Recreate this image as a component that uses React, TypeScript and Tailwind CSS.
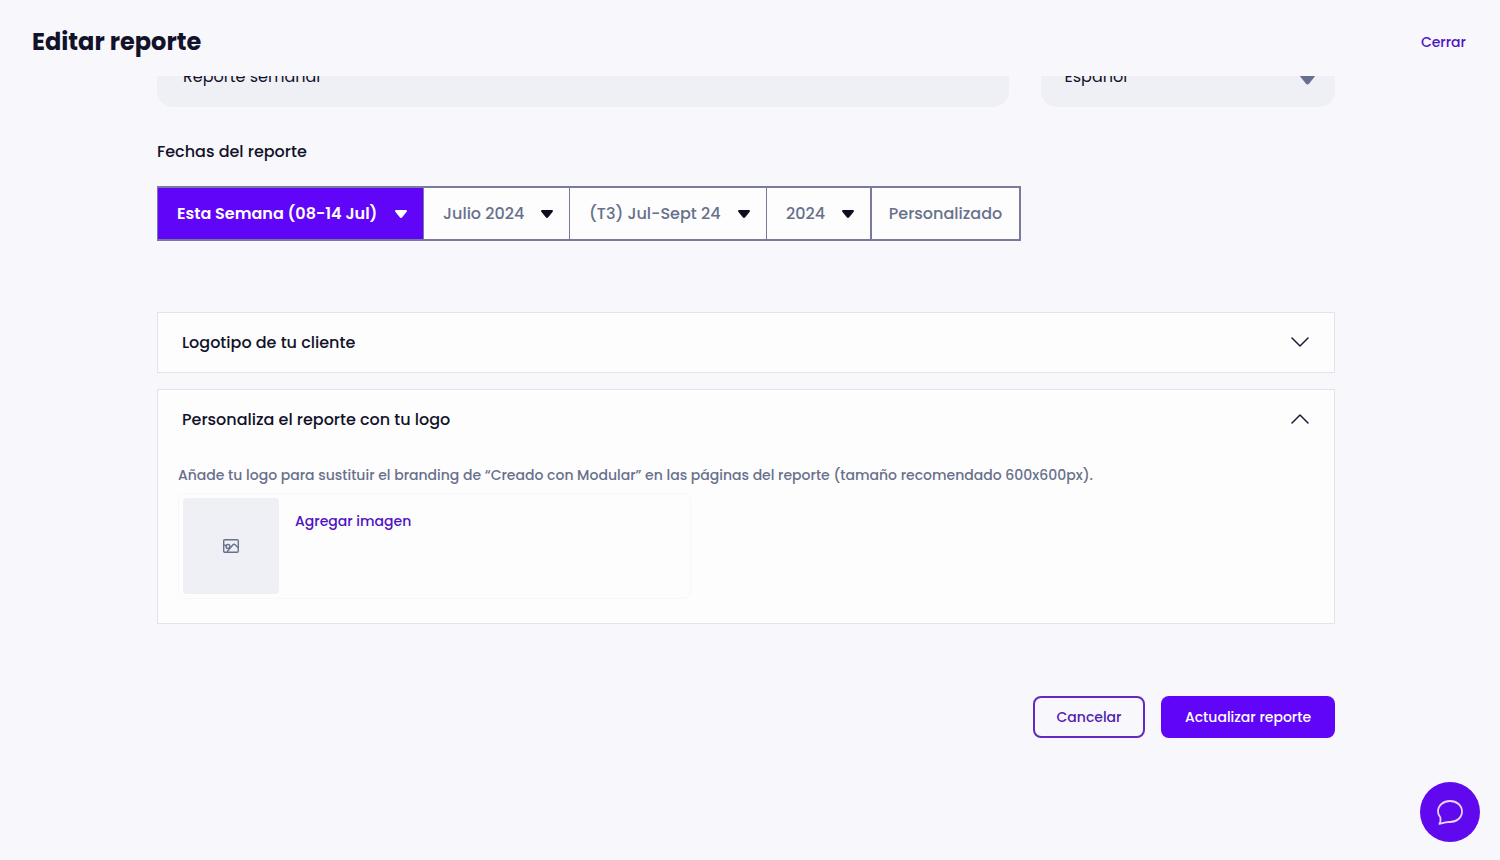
import { useState, type ReactNode } from "react";

const PERIODS = [
  { id: "week", label: "Periodo semanal", text: "Esta Semana (08-14 Jul)", width: "w-[267px]" },
  { id: "month", label: "Periodo mensual", text: "Julio 2024", width: "w-[147px]" },
  { id: "quarter", label: "Periodo trimestral", text: "(T3) Jul-Sept 24", width: "w-[198px]" },
  { id: "year", label: "Periodo anual", text: "2024", width: "w-[105px]" },
];

function Caret({ className = "" }: { className?: string }) {
  return (
    <svg viewBox="0 0 12 8" className={`pointer-events-none absolute ${className}`} fill="currentColor" aria-hidden="true">
      <path d="M1.2 0h9.6c1 0 1.5 1 .9 1.8L7.2 7.3c-.6.8-1.8.8-2.4 0L.3 1.800C-.3 1 .2 0 1.200 0Z" />
    </svg>
  );
}

function Chevron({ open }: { open: boolean }) {
  return (
    <svg viewBox="0 0 18 12" className="h-3 w-[18px]" fill="none" stroke="#1d1a38" strokeWidth="1.5" strokeLinecap="round" strokeLinejoin="round" aria-hidden="true">
      <path d={open ? "M1 9l8-8 8 8" : "M1 1l8 8 8-8"} />
    </svg>
  );
}

function ImageIcon() {
  return (
    <svg viewBox="0 0 16 14" className="h-[14px] w-4" fill="none" stroke="#68708c" strokeWidth="1.4" strokeLinecap="round" strokeLinejoin="round" aria-hidden="true">
      <rect x=".7" y=".7" width="14.6" height="12.6" rx="1.2" />
      <circle cx="5" cy="7.4" r="1.9" />
      <path d="M.9 5.8l2.400.8M4.400 12.200l5.600-6.400c.7-.8 1.500-.8 2.200 0l2.900 2.900" />
    </svg>
  );
}

function Panel({ title, open, onToggle, children }: { title: string; open: boolean; onToggle: () => void; children?: ReactNode }) {
  return (
    <section className="border border-[#e3e3ec] bg-[#fdfdfd]">
      <h2>
        <button type="button" aria-expanded={open} onClick={onToggle} className="flex h-[59px] w-full cursor-pointer items-center justify-between pr-[25px] pl-6 text-base font-medium">
          {title}
          <Chevron open={open} />
        </button>
      </h2>
      {open && children}
    </section>
  );
}

export default function App() {
  const [period, setPeriod] = useState("week");
  const [clientOpen, setClientOpen] = useState(false);
  const [logoOpen, setLogoOpen] = useState(true);

  return (
    <div className="min-h-screen bg-[#f8f8fc] font-[Poppins,Inter,sans-serif] text-[#12122a]">
      <header className="fixed inset-x-0 top-0 z-10 flex h-[76px] items-center justify-between bg-[#f8f8fc] pt-[7px] pr-[34px] pl-8">
        <h1 className="text-2xl font-bold">Editar reporte</h1>
        <button type="button" className="cursor-pointer text-sm font-medium text-[#4f12c4]">Cerrar</button>
      </header>

      <main className="pt-[45px] pr-6 pb-20 pl-4">
        <form className="mx-auto max-w-[1178px]" onSubmit={(e) => e.preventDefault()}>
          <div className="flex gap-8">
            <input aria-label="Nombre del reporte" defaultValue="Reporte semanal" className="h-[62px] min-w-0 flex-1 rounded-2xl bg-[#eff0f6] px-[26px] text-base outline-none" />
            <div className="relative w-1/4">
              <select aria-label="Idioma" className="h-[62px] w-full appearance-none rounded-2xl bg-[#eff0f6] px-6 pt-px text-base outline-none">
                <option>Español</option>
              </select>
              <Caret className="top-[29px] right-5 h-[11px] w-[15px] text-[#68708f]" />
            </div>
          </div>

          <fieldset className="mt-[33px]">
            <legend className="mb-[22px] text-base font-medium">Fechas del reporte</legend>
            <div className="flex">
              {PERIODS.map((p) => {
                const on = period === p.id;
                return (
                  <div key={p.id} className={`relative -mr-px ${p.width}`}>
                    <select
                      aria-label={p.label}
                      onFocus={() => setPeriod(p.id)}
                      className={`h-[55px] w-full appearance-none border-x border-y-2 border-[#787b9c] pl-[19px] text-base outline-none ${on ? "bg-[#6005f7] font-semibold text-white" : "bg-[#fdfdfd] font-medium text-[#68708c]"}`}
                    >
                      <option>{p.text}</option>
                    </select>
                    <Caret className={`top-6 right-[17px] h-2 w-3 ${on ? "text-white" : "text-[#0d0d20]"}`} />
                  </div>
                );
              })}
              <button type="button" onClick={() => setPeriod("custom")} className={`h-[55px] w-[151px] cursor-pointer border-2 border-[#787b9c] text-base font-medium ${period === "custom" ? "bg-[#6005f7] text-white" : "bg-[#fdfdfd] text-[#68708c]"}`}>
                Personalizado
              </button>
            </div>
          </fieldset>

          <div className="mt-[71px] flex flex-col gap-4">
            <Panel title="Logotipo de tu cliente" open={clientOpen} onToggle={() => setClientOpen(!clientOpen)} />
            <Panel title="Personaliza el reporte con tu logo" open={logoOpen} onToggle={() => setLogoOpen(!logoOpen)}>
              <div className="px-5 pt-[14px] pb-6">
                <p className="text-sm leading-6 font-medium text-[#68708c]">
                  Añade tu logo para sustituir el branding de “Creado con Modular” en las páginas del reporte (tamaño recomendado 600x600px).
                </p>
                <div className="mt-[6px] flex max-w-[513px] items-start gap-4 rounded-lg border border-[#f8f8fb] p-1">
                  <div className="flex size-24 items-center justify-center rounded-sm bg-[#eff0f6]">
                    <ImageIcon />
                  </div>
                  <button type="button" className="mt-[11px] cursor-pointer text-sm leading-6 font-medium text-[#4f12c4]">Agregar imagen</button>
                </div>
              </div>
            </Panel>
          </div>

          <div className="mt-[72px] flex justify-end gap-4 text-sm font-medium">
            <button type="button" className="h-[42px] w-28 cursor-pointer rounded-lg border-2 border-[#6429bd] pb-px text-[#5220b0]">Cancelar</button>
            <button type="submit" className="h-[42px] w-[174px] cursor-pointer rounded-lg bg-[#6005f7] pb-px text-white">Actualizar reporte</button>
          </div>
        </form>
      </main>

      <button type="button" aria-label="Abrir chat" className="fixed right-5 bottom-[18px] flex size-[60px] cursor-pointer items-center justify-center rounded-full bg-[#6008ee]">
        <svg viewBox="0 0 26 25" className="h-[25px] w-[26px]" fill="none" stroke="#e9d5fb" strokeWidth="1.8" strokeLinejoin="round" aria-hidden="true">
          <path d="M3.400 17.500C1.800 15.700 1 13.700 1 11.500 1 5.500 6.200 1 13 1s12 4.500 12 10.500-5.200 10.500-12 10.500c-1.600 0-3.100-.1-4.500.3L2.400 23.900c1-2 1.500-4.300 1-6.400Z" />
        </svg>
      </button>
    </div>
  );
}
